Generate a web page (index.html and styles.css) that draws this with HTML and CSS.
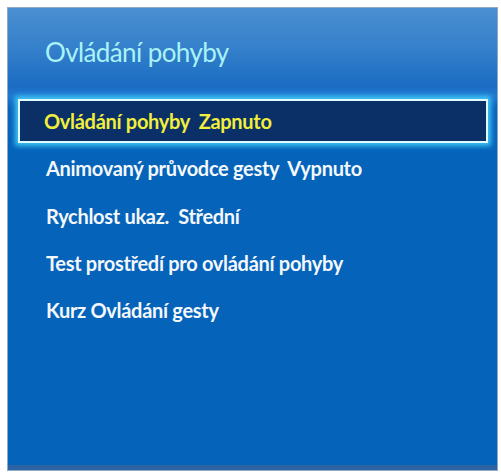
FILE: index.html
```html
<!DOCTYPE html>
<html lang="cs">
<head>
<meta charset="utf-8">
<title>Ovládání pohyby</title>
<link rel="stylesheet" href="styles.css">
</head>
<body>
<div class="panel">
  <h1 class="title">Ovládání pohyby</h1>
  <ul class="menu">
    <li class="item selected">Ovládání pohyby&nbsp; Zapnuto</li>
    <li class="item">Animovaný průvodce gesty&nbsp; Vypnuto</li>
    <li class="item">Rychlost ukaz.&nbsp; Střední</li>
    <li class="item">Test prostředí pro ovládání pohyby</li>
    <li class="item">Kurz Ovládání gesty</li>
  </ul>
</div>
</body>
</html>
```
FILE: styles.css
```css
html, body {
  margin: 0;
  padding: 0;
  background: #ffffff;
}
body {
  width: 501px;
  height: 473px;
  overflow: hidden;
  font-family: Lato, "Open Sans", sans-serif;
}
.panel {
  box-sizing: border-box;
  margin: 7px 3px 0 7px;
  width: 491px;
  height: 464px;
  border: 1px solid #8ea8c6;
  background: linear-gradient(180deg, #4b8fd1 0px, #3580cb 40px, #1a6cc2 78px, #1f7ad0 88px, #0b64bb 100px, #0563ba 140px, #0563ba 100%);
  box-shadow: inset 0 -5px 0 #2c63a3;
}
.title {
  margin: 0;
  padding: 31px 0 0 37px;
  font-size: 26px;
  line-height: 26px;
  font-weight: 400;
  letter-spacing: -0.6px;
  color: #a9f3f6;
}
.menu {
  list-style: none;
  margin: 34px 0 0 0;
  padding: 0;
  display: flex;
  flex-direction: column;
  gap: 3.3px;
}
.item {
  box-sizing: border-box;
  height: 44px;
  margin: 0 9px 0 10px;
  padding: 0 0 0 26px;
  border: 2px solid transparent;
  font-size: 20px;
  line-height: 40px;
  font-weight: 700;
  letter-spacing: -0.3px;
  color: #f4f8fb;
  white-space: nowrap;
}
.item.selected {
  padding-left: 24px;
  background: #0a3067;
  border-color: #e2fbff;
  box-shadow: 0 0 5px 3px rgba(70, 215, 255, 0.85);
  color: #f2ee3c;
}
```
